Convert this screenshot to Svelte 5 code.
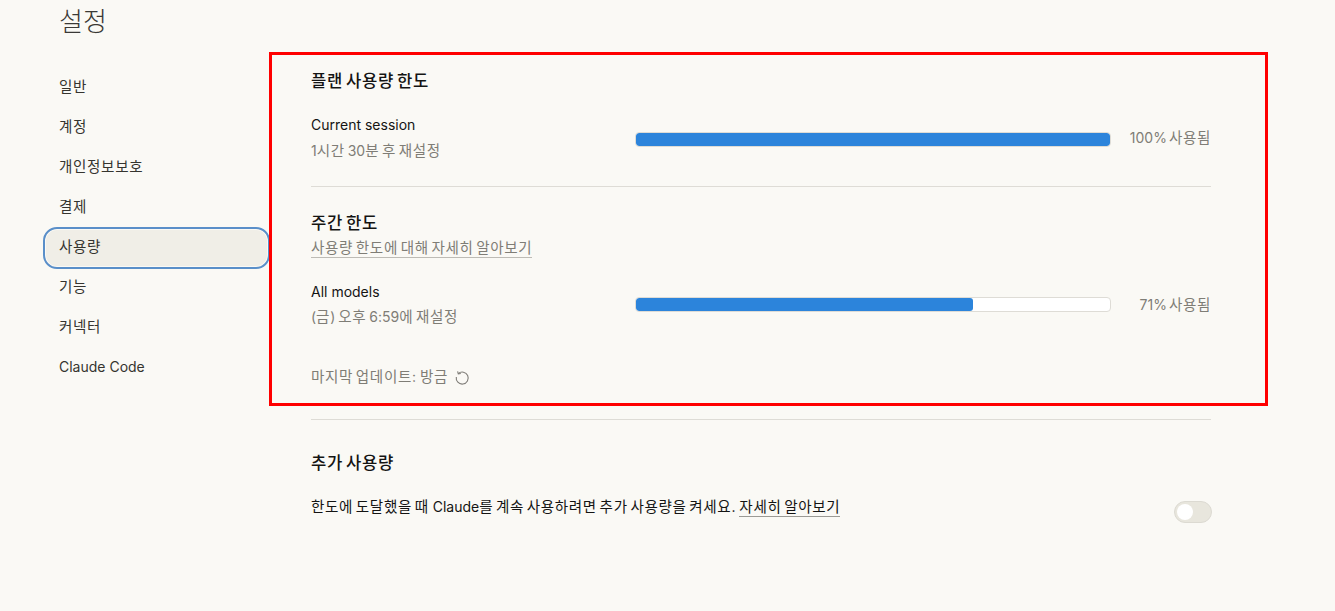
<script>
	const nav = ["일반", "계정", "개인정보보호", "결제", "사용량", "기능", "커넥터", "Claude Code"];
	const active = "사용량";

	// hangul runs get their own span, the CJK font sets tighter than the original
	const runs = (text) =>
		text
			.split(/([\uac00-\ud7a3]+(?: [\uac00-\ud7a3]+)*)/)
			.map((s, i) => ({ s, ko: i % 2 === 1 }))
			.filter((r) => r.s);
</script>

{#snippet t(text)}{#each runs(text) as r}<span class:ko={r.ko}>{r.s}</span>{/each}{/snippet}

<div class="page">
	<h1>설정</h1>
	<div class="layout">
		<nav>
			{#each nav as item}
				<div class="nav-item" class:active={item === active}>{@render t(item)}</div>
			{/each}
		</nav>

		<main>
			<section class="limits">
				<h2>{@render t("플랜 사용량 한도")}</h2>
				<div class="usage first">
					<div class="info">
						<div class="name">Current session</div>
						<div class="sub">{@render t("1시간 30분 후 재설정")}</div>
					</div>
					<div class="bar"><div class="fill" style="width: 100%"></div></div>
					<div class="pct">{@render t("100% 사용됨")}</div>
				</div>

				<hr class="split" />

				<h2>{@render t("주간 한도")}</h2>
				<div class="learn"><span class="link muted">{@render t("사용량 한도에 대해 자세히 알아보기")}</span></div>
				<div class="usage second">
					<div class="info">
						<div class="name">All models</div>
						<div class="sub">{@render t("(금) 오후 6:59에 재설정")}</div>
					</div>
					<div class="bar"><div class="fill" style="width: 71%"></div></div>
					<div class="pct">{@render t("71% 사용됨")}</div>
				</div>

				<div class="updated">
					<span>{@render t("마지막 업데이트: 방금")}</span>
					<svg width="16" height="16" viewBox="0 0 16 16" fill="none" stroke="#7f7d78" stroke-width="1.1">
						<path d="M4.2 3.6A6 6 0 1 1 2.3 7" />
						<path d="M3.6 1.4l.7 2.5 2.5-.4" />
					</svg>
				</div>
			</section>

			<hr class="extra-rule" />

			<section>
				<h2>{@render t("추가 사용량")}</h2>
				<div class="extra">
					<p>{@render t("한도에 도달했을 때 Claude를 계속 사용하려면 추가 사용량을 켜세요. ")}<span class="link">{@render t("자세히 알아보기")}</span></p>
					<div class="toggle"><div class="knob"></div></div>
				</div>
			</section>
		</main>
	</div>
	<div class="highlight"></div>
</div>

<style>
	:global(body) {
		background: #faf9f5;
	}
	.page {
		position: relative;
		height: 611px;
		overflow: hidden;
		font-family: Inter, "Noto Sans CJK KR", sans-serif;
		font-size: 14px;
		color: #1f1e1b;
	}
	.ko {
		font-size: 1.04em;
		letter-spacing: 0.045em;
		word-spacing: -0.14em;
	}
	h1 {
		margin: 0;
		padding: 3px 0 0 59px;
		height: 41px;
		box-sizing: border-box;
		font-family: "Noto Sans CJK KR", serif;
		font-size: 26px;
		font-weight: 300;
		line-height: 34px;
		color: #3a3936;
	}
	.layout {
		display: flex;
		padding-left: 43px;
	}
	nav {
		width: 227px;
		flex: none;
		margin-right: 41px;
		padding-top: 28px;
		display: flex;
		flex-direction: column;
		gap: 4px;
	}
	.nav-item {
		height: 36px;
		line-height: 36px;
		padding-left: 16px;
		border-radius: 10px;
		color: #35342f;
	}
	.nav-item.active {
		box-sizing: border-box;
		height: 42px;
		margin: -2px 0 -4px;
		padding-left: 14px;
		line-height: 36px;
		border: 2px solid #5a8fc9;
		border-radius: 14px;
		background: #f0eee7;
		box-shadow: inset 0 0 0 1px #faf9f5;
	}
	main {
		width: 900px;
		padding-top: 28px;
	}
	h2 {
		margin: 0;
		font-size: 16px;
		font-weight: 500;
		line-height: 24px;
		color: #141413;
	}
	.usage {
		display: grid;
		grid-template-columns: 324px 476px 100px;
		align-items: center;
	}
	.first {
		margin-top: 22px;
	}
	.second {
		margin-top: 24px;
	}
	.name {
		line-height: 20px;
		color: #141413;
	}
	.sub {
		margin-top: 6px;
		line-height: 20px;
		color: #7f7d76;
		word-spacing: -1px;
	}
	.second .sub {
		margin-top: 5px;
	}
	.bar {
		height: 15px;
		margin-top: 3px;
		box-sizing: border-box;
		background: #fff;
		border: 1px solid #dedcd6;
		border-radius: 4px;
		overflow: hidden;
	}
	.second .bar {
		margin-top: 0;
	}
	.fill {
		height: 100%;
		background: #2c84db;
		border-radius: 3px;
	}
	.pct {
		text-align: right;
		color: #7f7d76;
		margin-top: -3px;
		word-spacing: -2px;
	}
	hr {
		border: 0;
		border-top: 1px solid #dedcd6;
	}
	hr.split {
		margin: 25px 0 24px;
	}
	.learn {
		line-height: 20px;
		margin-top: 3px;
	}
	.link {
		border-bottom: 1px solid #9b9a95;
		padding-bottom: 1px;
	}
	.muted {
		color: #7f7d76;
		border-bottom-color: #bdbbb5;
	}
	.updated {
		display: flex;
		align-items: center;
		gap: 6px;
		margin-top: 40px;
		line-height: 20px;
		color: #7f7d76;
	}
	.updated svg {
		margin-top: 1px;
	}
	hr.extra-rule {
		margin: 32px 0 31px;
	}
	.extra {
		display: flex;
		justify-content: space-between;
		align-items: center;
		margin-top: 16px;
	}
	.extra p {
		margin: 0;
		line-height: 20px;
		color: #141413;
	}
	.toggle {
		width: 38px;
		height: 22px;
		box-sizing: border-box;
		margin: 10px -1px 0 0;
		background: #e8e6dd;
		border: 1px solid #dcdad2;
		border-radius: 11px;
		padding: 2px 0 0 2px;
	}
	.knob {
		width: 16px;
		height: 16px;
		border-radius: 50%;
		background: #fff;
	}
	.highlight {
		position: absolute;
		left: 269px;
		top: 52px;
		width: 999px;
		height: 354px;
		box-sizing: border-box;
		border: 3px solid #f00;
	}
</style>
